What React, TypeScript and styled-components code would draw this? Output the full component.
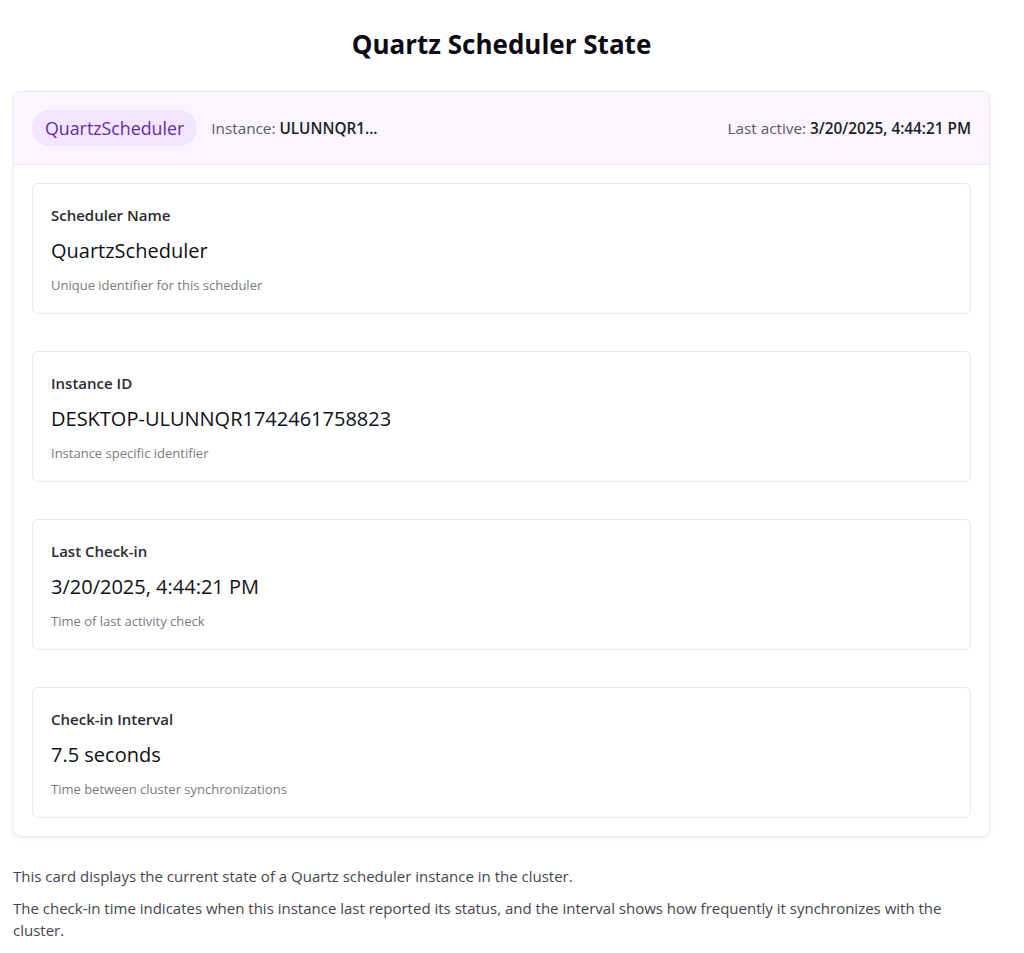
import React from "react";
import styled, { createGlobalStyle } from "styled-components";

const Global = createGlobalStyle`
  html, body { margin: 0; padding: 0; background: #ffffff; }
  body { font-family: "Open Sans", "Noto Sans", sans-serif; color: #1a1a1a; }
  * { box-sizing: border-box; }
`;

const Page = styled.div`
  width: 977px;
  margin-left: 13px;
  padding-top: 27px;
  padding-bottom: 20px;
`;

const Title = styled.h1`
  margin: 0 0 29px;
  text-align: center;
  font-size: 26px;
  line-height: 35px;
  font-weight: 700;
  color: #0b0b14;
`;

const Card = styled.section`
  border: 1px solid #ececf0;
  border-radius: 8px;
  box-shadow: 0 1px 4px rgba(0, 0, 0, 0.08);
  overflow: hidden;
  background: #fff;
`;

const Header = styled.header`
  display: flex;
  align-items: center;
  justify-content: space-between;
  height: 73px;
  padding: 0 18px;
  background: #faf5ff;
  border-bottom: 1px solid #efe8f6;
`;

const HeaderLeft = styled.div`
  display: flex;
  align-items: center;
  gap: 14px;
`;

const Badge = styled.span`
  display: inline-flex;
  align-items: center;
  height: 36px;
  padding: 0 13px;
  border-radius: 18px;
  background: #f1e6fd;
  color: #6b2a9e;
  font-size: 17.8px;
  font-weight: 500;
`;

const Meta = styled.span`
  font-size: 15.3px;
  color: #5a5a66;
`;

const MetaValue = styled.strong`
  font-weight: 600;
  color: #1d1d26;
`;

const Body = styled.div`
  display: flex;
  flex-direction: column;
  gap: 37px;
  padding: 18px 18px 18px;
`;

const Item = styled.div`
  border: 1px solid #e9e9ee;
  border-radius: 6px;
  padding: 20px 18px 18px;
  display: flex;
  flex-direction: column;
  height: 131px;
`;

const Label = styled.div`
  font-size: 15px;
  line-height: 22px;
  font-weight: 600;
  color: #2a2a33;
`;

const Value = styled.div`
  margin-top: 11px;
  font-size: 20px;
  line-height: 28px;
  font-weight: 500;
  color: #0f0f18;
`;

const Desc = styled.div`
  margin-top: 11px;
  font-size: 13px;
  line-height: 18px;
  color: #7a7a82;
`;

const Notes = styled.div`
  margin-top: 28px;
`;

const Note = styled.p`
  margin: 0 0 10px;
  font-size: 15px;
  line-height: 22px;
  color: #45454f;
`;

const items = [
  { label: "Scheduler Name", value: "QuartzScheduler", desc: "Unique identifier for this scheduler" },
  { label: "Instance ID", value: "DESKTOP-ULUNNQR1742461758823", desc: "Instance specific identifier" },
  { label: "Last Check-in", value: "3/20/2025, 4:44:21 PM", desc: "Time of last activity check" },
  { label: "Check-in Interval", value: "7.5 seconds", desc: "Time between cluster synchronizations" },
];

export default function App() {
  return (
    <>
      <Global />
      <Page>
        <Title>Quartz Scheduler State</Title>
        <Card>
          <Header>
            <HeaderLeft>
              <Badge>QuartzScheduler</Badge>
              <Meta>
                Instance: <MetaValue>ULUNNQR1...</MetaValue>
              </Meta>
            </HeaderLeft>
            <Meta>
              Last active: <MetaValue>3/20/2025, 4:44:21 PM</MetaValue>
            </Meta>
          </Header>
          <Body>
            {items.map((it) => (
              <Item key={it.label}>
                <Label>{it.label}</Label>
                <Value>{it.value}</Value>
                <Desc>{it.desc}</Desc>
              </Item>
            ))}
          </Body>
        </Card>
        <Notes>
          <Note>This card displays the current state of a Quartz scheduler instance in the cluster.</Note>
          <Note>
            The check-in time indicates when this instance last reported its status, and the interval shows how
            frequently it synchronizes with the cluster.
          </Note>
        </Notes>
      </Page>
    </>
  );
}
